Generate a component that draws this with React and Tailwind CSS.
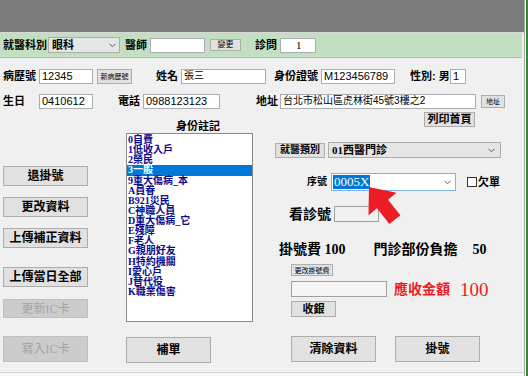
import React from "react";

const Chev = () => (
  <svg width="7" height="5" viewBox="0 0 7 5" className="shrink-0">
    <polyline points="0.5,0.8 3.5,3.8 6.5,0.8" fill="none" stroke="#606060" strokeWidth="1" />
  </svg>
);

const Btn = ({ className = "", children, disabled }) => (
  <div
    className={
      "flex items-center justify-center leading-none whitespace-nowrap font-bold border " +
      (disabled
        ? "bg-[#cccccc] border-[#bfbfbf] text-[#a3a3a3] "
        : "bg-[#e1e1e1] border-[#adadad] text-black ") +
      className
    }
  >
    {children}
  </div>
);

const items = [
  "0自費",
  "1低收入戶",
  "2榮民",
  "3一般",
  "9重大傷病_本",
  "A員眷",
  "B921災民",
  "C神職人員",
  "D重大傷病_它",
  "E殘障",
  "F老人",
  "G親朋好友",
  "H特約機關",
  "I愛心戶",
  "J替代役",
  "K職業傷害",
];

export default function App() {
  return (
    <div className="w-[528px] h-[376px] flex overflow-hidden bg-[#f0f0f0] font-['Liberation_Sans','Noto_Sans_CJK_TC',sans-serif] text-black">
      <div className="w-[524px] flex flex-col">
        <div className="h-[32px] bg-[#7a7a7a] shrink-0" />
        <div className="h-px bg-[#d8d8d8] shrink-0" />
        {/* green bar */}
        <div className="h-[25px] shrink-0 bg-[#c2dfc2] border-b border-[#b0b8b0] flex items-center pl-[3px] w-[522px]">
          <span className="w-[41px] text-[11px] font-bold leading-none whitespace-nowrap">就醫科別</span>
          <div className="ml-[4px] w-[72px] h-[16px] bg-[#e5e5e5] border border-[#acacac] flex items-center justify-between pl-[3px] pr-[3px]">
            <span className="text-[11px] font-bold leading-none">眼科</span>
            <Chev />
          </div>
          <span className="ml-[5px] w-[20px] text-[11px] font-bold leading-none whitespace-nowrap">醫師</span>
          <div className="ml-[5px] w-[55px] h-[15px] bg-white border border-[#abadb3]" />
          <Btn className="ml-[5px] w-[31px] h-[12px] text-[8px] font-normal">變更</Btn>
          <span className="ml-[14px] w-[21px] text-[11px] font-bold leading-none whitespace-nowrap">診問</span>
          <div className="ml-[4px] w-[36px] h-[15px] bg-white border border-[#abadb3] flex items-center pl-[15px] text-[11px] font-['Liberation_Serif'] leading-none">
            1
          </div>
        </div>

        {/* main panel */}
        <div className="flex-1 flex flex-col border-b border-[#d4d4d4] min-h-0">
          {/* row 2 */}
          <div className="mt-[10px] h-[16px] flex items-center pl-[3px]">
            <span className="w-[36px] text-[11px] font-bold leading-none whitespace-nowrap">病歷號</span>
            <div className="w-[54px] h-[15px] bg-white border border-[#abadb3] flex items-center pl-[2px] text-[11px] leading-none">12345</div>
            <Btn className="ml-[4px] w-[35px] h-[15px] text-[7px] font-normal">新病歷號</Btn>
            <span className="ml-[24px] w-[22px] text-[11px] font-bold leading-none whitespace-nowrap">姓名</span>
            <div className="ml-[3px] w-[85px] h-[15px] bg-white border border-[#abadb3] flex items-center pl-[2px] text-[10px] leading-none">張三</div>
            <span className="ml-[8px] w-[44px] text-[11px] font-bold leading-none whitespace-nowrap">身份證號</span>
            <div className="ml-[3px] w-[74px] h-[15px] bg-white border border-[#abadb3] flex items-center pl-[2px] text-[11px] leading-none">M123456789</div>
            <span className="ml-[15px] w-[38px] text-[11px] font-bold leading-none whitespace-nowrap">性別: 男</span>
            <div className="ml-[2px] w-[16px] h-[15px] bg-white border border-[#abadb3] flex items-center pl-[2px] text-[11px] leading-none">1</div>
          </div>

          {/* row 3 */}
          <div className="mt-[9px] h-[16px] flex items-center pl-[3px]">
            <span className="w-[36px] text-[11px] font-bold leading-none whitespace-nowrap">生日</span>
            <div className="w-[54px] h-[15px] bg-white border border-[#abadb3] flex items-center pl-[2px] text-[11px] leading-none">0410612</div>
            <span className="ml-[25px] w-[22px] text-[11px] font-bold leading-none whitespace-nowrap">電話</span>
            <div className="ml-[3px] w-[77px] h-[15px] bg-white border border-[#abadb3] flex items-center pl-[2px] text-[11px] leading-none">0988123123</div>
            <span className="ml-[36px] w-[21px] text-[11px] font-bold leading-none whitespace-nowrap">地址</span>
            <div className="ml-[3px] w-[196px] h-[15px] bg-white border border-[#abadb3] flex items-center pl-[2px] text-[10px] leading-none whitespace-nowrap">台北市松山區虎林街45號3樓之2</div>
            <Btn className="ml-[5px] w-[24px] h-[13px] text-[7px] font-normal">地址</Btn>
          </div>

          {/* columns */}
          <div className="mt-[3px] flex items-start flex-1">
            {/* left */}
            <div className="ml-[3px] w-[85px] pt-[54px] flex flex-col">
              <Btn className="h-[20px] text-[12px]">退掛號</Btn>
              <Btn className="mt-[11px] h-[20px] text-[12px]">更改資料</Btn>
              <Btn className="mt-[11px] h-[20px] text-[12px]">上傳補正資料</Btn>
              <Btn className="mt-[19px] h-[20px] text-[12px]">上傳當日全部</Btn>
              <Btn disabled className="mt-[12px] h-[19px] text-[12px] font-normal font-['Liberation_Serif','Noto_Sans_CJK_TC',serif]">更新IC卡</Btn>
              <Btn disabled className="mt-[18px] h-[26px] text-[12px] font-normal font-['Liberation_Serif','Noto_Sans_CJK_TC',serif]">寫入IC卡</Btn>
            </div>

            {/* middle list */}
            <div className="ml-[38px] w-[127px] flex flex-col">
              <div className="mt-[9px] h-[11px] pl-[50px] text-[11px] font-bold leading-none whitespace-nowrap">身份註記</div>
              <div className="mt-[1px] h-[189px] bg-white border border-[#8a8a8a] pt-[1px] overflow-hidden font-['Liberation_Serif','Noto_Sans_CJK_TC',serif]">
                {items.map((t, i) => (
                  <div
                    key={t}
                    className={
                      "h-[10.13px] leading-[10.13px] text-[10px] font-bold pl-[1px] whitespace-nowrap " +
                      (i === 3 ? "bg-[#0078d7] text-white" : "text-[#0a0a8c]")
                    }
                  >
                    {t}
                  </div>
                ))}
              </div>
              <Btn className="mt-[15px] w-[85px] h-[26px] text-[12px]">補單</Btn>
            </div>

            {/* right */}
            <div className="ml-[22px] w-[226px] flex flex-col relative">
              <Btn className="ml-[149px] w-[51px] h-[15px] text-[11px]">列印首頁</Btn>
              <div className="mt-[15px] flex items-center">
                <Btn className="w-[50px] h-[15px] text-[10px]">就醫類別</Btn>
                <div className="ml-[3px] w-[173px] h-[16px] bg-[#e5e5e5] border border-[#acacac] flex items-center justify-between pl-[3px] pr-[5px]">
                  <span className="text-[11px] font-bold leading-none font-['Liberation_Serif','Noto_Sans_CJK_TC',serif]">01西醫門診</span>
                  <Chev />
                </div>
              </div>
              <div className="mt-[15px] flex items-center h-[18px]">
                <span className="ml-[32px] w-[20px] text-[10px] font-bold leading-none whitespace-nowrap">序號</span>
                <div className="ml-[4px] w-[125px] h-[18px] bg-white border border-[#7eb4ea] flex items-center justify-between pl-[1px] pr-[4px]">
                  <span className="bg-[#0078d7] text-white text-[13px] leading-[14px] px-[1px] font-['Liberation_Serif',serif]">0005X</span>
                  <Chev />
                </div>
                <div className="ml-[11px] w-[10px] h-[10px] bg-white border border-[#333333]" />
                <span className="ml-[1px] text-[11px] font-bold leading-none whitespace-nowrap">欠單</span>
              </div>
              <div className="mt-[15px] flex items-center h-[16px]">
                <span className="ml-[14px] w-[42px] text-[14px] font-bold leading-none whitespace-nowrap">看診號</span>
                <div className="ml-[3px] w-[45px] h-[16px] bg-[#f0f0f0] border border-[#a0a0a0]" />
              </div>
              <div className="mt-[21px] flex items-center h-[13px] font-['Liberation_Serif','Noto_Sans_CJK_TC',serif]">
                <span className="ml-[4px] text-[14px] font-bold leading-none whitespace-nowrap">掛號費 100</span>
                <span className="ml-[28px] text-[14px] font-bold leading-none whitespace-nowrap">門診部份負擔</span>
                <span className="ml-[15px] text-[14px] font-bold leading-none whitespace-nowrap">50</span>
              </div>
              <Btn className="mt-[8px] ml-[16px] w-[42px] h-[12px] text-[7px] font-normal">更改掛號費</Btn>
              <div className="mt-[5px] flex items-center h-[16px]">
                <div className="ml-[16px] w-[96px] h-[16px] bg-[#f5f5f5] border border-[#a0a0a0]" />
                <span className="ml-[7px] text-[14px] font-bold leading-none whitespace-nowrap text-[#ee1c1c]">應收金額</span>
                <span className="ml-[10px] text-[19px] leading-none whitespace-nowrap text-[#ee1c1c] font-['Liberation_Serif',serif]">100</span>
              </div>
              <Btn className="mt-[4px] ml-[16px] w-[45px] h-[16px] text-[11px]">收銀</Btn>
              <div className="mt-[19px] flex">
                <Btn className="ml-[16px] w-[85px] h-[26px] text-[12px]">清除資料</Btn>
                <Btn className="ml-[19px] w-[85px] h-[26px] text-[12px]">掛號</Btn>
              </div>

              {/* red arrow overlay */}
              <svg className="absolute left-[90px] top-[72px]" width="45" height="42" viewBox="365 185 45 42">
                <polygon
                  points="369,188 396.5,193.8 388,200.7 400.4,216.3 389.4,224.9 377,209.3 368.5,216.2"
                  fill="#ee1c24"
                />
              </svg>
            </div>
          </div>
        </div>
        <div className="h-[3px] bg-[#f7f7f7] shrink-0" />
      </div>
      <div className="w-px bg-[#a8a8a8]" />
      <div className="w-px bg-[#ffffff]" />
      <div className="w-[2px] bg-[#2e8b2e]" />
    </div>
  );
}
